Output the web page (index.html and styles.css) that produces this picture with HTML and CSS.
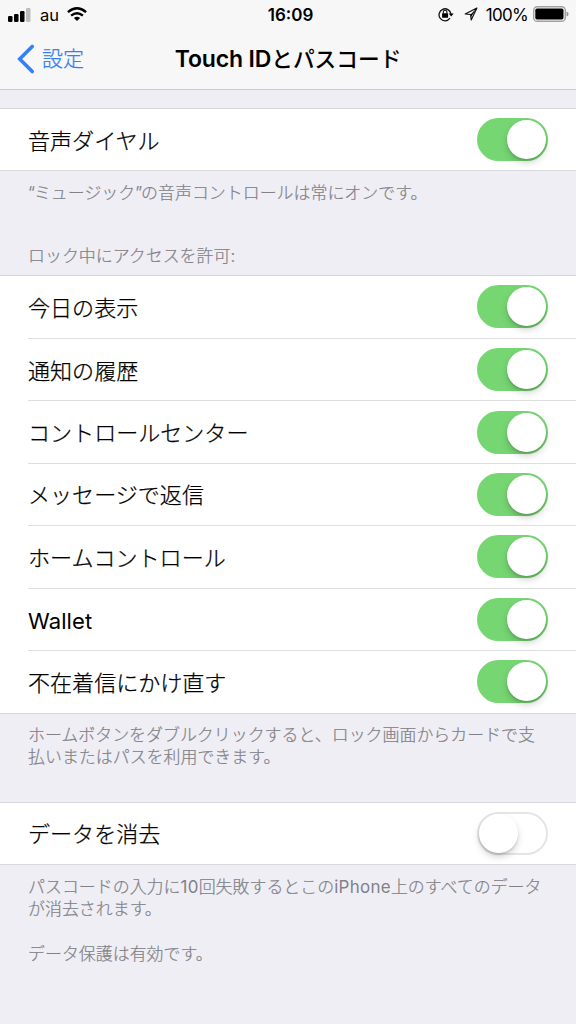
FILE: index.html
```html
<!DOCTYPE html>
<html lang="ja">
<head>
<meta charset="utf-8">
<title>Touch IDとパスコード</title>
<link rel="stylesheet" href="styles.css">
</head>
<body>
<header class="header">
  <div class="status">
    <div class="status-left">
      <svg class="signal" width="23" height="14" viewBox="0 0 23 14"><rect x="0" y="8" width="4.5" height="6" rx="1.3"/><rect x="6" y="6" width="4.5" height="8" rx="1.3"/><rect x="12" y="3" width="4.5" height="11" rx="1.3"/><rect x="18" y="0" width="4.5" height="14" rx="1.3" fill="#bdbdbd"/></svg>
      <span class="carrier">au</span>
      <svg class="wifi" width="20" height="14" viewBox="0 0 20 14"><g fill="none" stroke="#000" stroke-width="2.3"><path d="M.9 5.2Q10-2.6 19.1 5.2"/><path d="M4.1 8.7Q10 3.7 15.9 8.7"/></g><path d="M6.9 10.9Q10 8.6 13.1 10.9L10 14Z"/></svg>
    </div>
    <time class="clock">16:09</time>
    <div class="status-right">
      <svg class="lock" width="16" height="15" viewBox="0 0 16 15"><path d="M12 11.2A6 6 0 1 1 13 7" fill="none" stroke="#111" stroke-width="1.3"/><path d="M10.7 6.5h5L13.2 9.4Z"/><rect x="4.1" y="6.3" width="6" height="4.5" rx=".6"/><path d="M5.3 6.7V5a1.8 1.8 0 0 1 3.6 0v1.7" fill="none" stroke="#111" stroke-width="1.1"/></svg>
      <svg class="location" width="14" height="14" viewBox="0 0 14 14"><path d="M12.9 1L1.2 7L6.6 7.5L7.2 12.9Z" fill="none" stroke="#111" stroke-width="1.2" stroke-linejoin="round"/><path d="M12.9 1L6.6 7.5L7 10Z"/></svg>
      <span class="percent">100%</span>
      <svg class="battery" width="36" height="16" viewBox="0 0 36 16"><rect x=".7" y=".7" width="31.6" height="14.6" rx="3.6" fill="none" stroke="#a2a2a2" stroke-width="1.4"/><rect x="2.3" y="2.5" width="28.2" height="11" rx="1.7"/><path d="M33.5 5.4Q35.6 6 35.6 8Q35.6 10 33.5 10.6Z" fill="#999"/></svg>
    </div>
  </div>
  <nav class="nav">
    <a class="back"><svg width="18" height="30" viewBox="0 0 18 30"><path d="M15.2 2.5L2.7 15L15.2 27.5" fill="none" stroke="#3480f8" stroke-width="3.6" stroke-linecap="round"/></svg><span>設定</span></a>
    <h1 class="title"><span class="title-latin">Touch ID</span>とパスコード</h1>
  </nav>
</header>
<main>
  <section class="card first"><div class="row"><span>音声ダイヤル</span><i class="switch on"></i></div></section>
  <p class="note music"><span class="quote">“</span>ミュージック<span class="quote">”</span>の音声コントロールは常にオンです。</p>
  <h2 class="note heading">ロック中にアクセスを許可:</h2>
  <section class="card group">
    <div class="row"><span>今日の表示</span><i class="switch on"></i></div>
    <div class="row"><span>通知の履歴</span><i class="switch on"></i></div>
    <div class="row"><span>コントロールセンター</span><i class="switch on"></i></div>
    <div class="row"><span>メッセージで返信</span><i class="switch on"></i></div>
    <div class="row"><span>ホームコントロール</span><i class="switch on"></i></div>
    <div class="row"><span class="latin">Wallet</span><i class="switch on"></i></div>
    <div class="row"><span>不在着信にかけ直す</span><i class="switch on"></i></div>
  </section>
  <p class="note">ホームボタンをダブルクリックすると、ロック画面からカードで支<br>払いまたはパスを利用できます。</p>
  <section class="card erase"><div class="row"><span>データを消去</span><i class="switch"></i></div></section>
  <p class="note after-erase">パスコードの入力に<span class="latin">10</span>回失敗するとこの<span class="latin">iPhone</span>上のすべてのデータ<br>が消去されます。</p>
  <p class="note last">データ保護は有効です。</p>
</main>
</body>
</html>
```
FILE: styles.css
```css
* { box-sizing: border-box; }
body { margin: 0; height: 1024px; overflow: hidden; background: #efeef4; color: #000; font-family: Inter, "Noto Sans CJK JP", sans-serif; }
.header { height: 90px; background: #f7f7f7; border-bottom: 1px solid #cbcbce; }
.status { height: 29px; display: grid; grid-template-columns: 1fr auto 1fr; align-items: center; padding: 0 7px 0 8px; }
.status-left, .status-right { display: flex; align-items: center; }
.status-right { justify-content: flex-end; }
.carrier { margin: 1px 8px 0 9px; font-size: 16.5px; line-height: 20px; }
.wifi { margin-bottom: 1px; }
.clock { margin-left: 4px; font-size: 17px; font-weight: 600; line-height: 20px; }
.lock { margin-right: 10px; margin-bottom: 1px; }
.location { margin-right: 8px; margin-bottom: 1px; }
.percent { font-size: 17px; line-height: 20px; letter-spacing: -.7px; margin-right: 5px; }
.battery { margin-bottom: 1px; }
.nav { height: 60px; display: grid; grid-template-columns: 1fr auto 1fr; align-items: center; padding: 0 17px; }
.back { display: flex; align-items: center; gap: 7px; color: #3480f8; font-size: 21px; font-weight: 300; -webkit-text-stroke: .25px; line-height: 30px; }
.title { margin: 0 0 1px; font-size: 21.7px; font-weight: 500; line-height: 32px; white-space: nowrap; }
.title-latin { font-size: 23px; font-weight: 600; letter-spacing: -.15px; }
.card { background: #fff; border-top: 1px solid #d8d8dc; border-bottom: 1px solid #d8d8dc; }
.first { margin-top: 18px; height: 63px; }
.row { height: 61px; margin-left: 28px; padding-right: 28px; display: flex; align-items: center; justify-content: space-between; font-size: 22.05px; font-weight: 300; line-height: 32px; }
.row span { padding-top: 2px; -webkit-text-stroke: .25px; }
.latin { font-weight: 400; }
.row .latin { letter-spacing: .1px; padding-top: 3px; -webkit-text-stroke: 0; }
.group { height: 439px; display: grid; grid-template-rows: repeat(7, 1fr); }
.group .row { height: auto; }
.group .row + .row { border-top: 1px solid #dedee0; }
.note { margin: 0; padding: 10px 28px 0; color: #818187; font-size: 16.95px; font-weight: 300; -webkit-text-stroke: .2px; line-height: 22.5px; white-space: nowrap; }
.note .latin { letter-spacing: .3px; -webkit-text-stroke: 0; }
.note .quote { letter-spacing: -1px; }
.music, .after-erase { padding-top: 11px; }
.heading { padding-top: 0; margin-top: 40px; height: 30px; }
.erase { margin-top: 33px; height: 63px; }
.last { padding-top: 22px; }
.switch { width: 71px; height: 43px; border-radius: 22px; display: flex; border: 2px solid #e5e5e5; background: #fff; }
.switch::after { content: ""; width: 39px; height: 39px; border-radius: 50%; background: #fff; box-shadow: 0 4px 7px rgba(0,0,0,.17), 0 2px 2px rgba(0,0,0,.1); }
.switch.on { background: #76d672; border-color: #76d672; justify-content: flex-end; }
```
